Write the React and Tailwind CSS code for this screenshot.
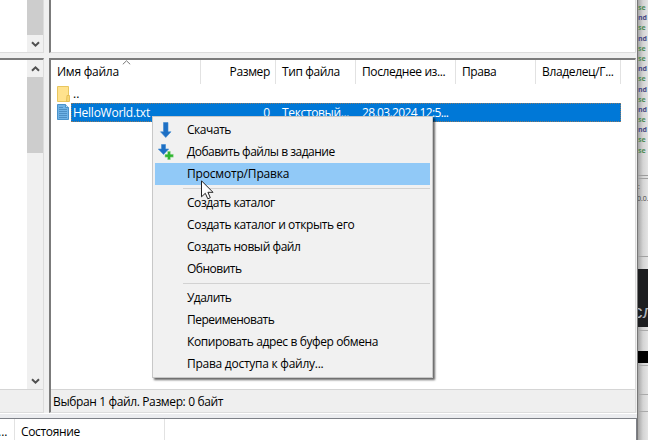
import React from "react";

const Chevron = ({ up }) => (
  <svg width="9" height="7" viewBox="0 0 9 7" className={up ? "rotate-180" : ""}>
    <path d="M1 1.2 L4.5 4.7 L8 1.2" fill="none" stroke="#505050" strokeWidth="2" />
  </svg>
);

const Arrow = ({ small }) =>
  small ? (
    <svg width="16" height="16" viewBox="0 0 16 16">
      <path d="M3.500 .5h4v4.500h3.200L5.500 10.500.3 5h3.200z" fill="#1d6fc4" stroke="#3a86d0" strokeWidth=".6" />
      <path d="M9.500 7.300h3v2.900h2.900v3h-2.900v2.600h-3v-2.600H6.900v-3h2.600z" fill="#2fb52f" stroke="#c9e8c9" strokeWidth=".4" />
    </svg>
  ) : (
    <svg width="16" height="16" viewBox="0 0 16 16">
      <path d="M5.500 .5h4.500v9.300h3L7.750 15.500 2.500 9.800h3z" fill="#1d6fc4" stroke="#3a86d0" strokeWidth=".6" />
    </svg>
  );

const menu = [
  ["Скачать", "tracking-[-0.45px]", "down"],
  ["Добавить файлы в задание", "tracking-[-0.5px]", "add"],
  ["Просмотр/Правка", "tracking-[-0.18px]", "hover"],
  null,
  ["Создать каталог", "tracking-[-0.45px]"],
  ["Создать каталог и открыть его", "tracking-[-0.4px]"],
  ["Создать новый файл", "tracking-[-0.44px]"],
  ["Обновить", "tracking-[-0.5px]"],
  null,
  ["Удалить", "tracking-[-0.55px]"],
  ["Переименовать", "tracking-[-0.5px]"],
  ["Копировать адрес в буфер обмена", "tracking-[-0.39px]"],
  ["Права доступа к файлу...", "tracking-[-0.26px]"],
];

function ContextMenu() {
  return (
    <div className="absolute left-[152px] top-[116px] w-[281px] border border-[#c8c8c8] bg-[#f1f1f1] p-[2px] shadow-[2px_2px_2px_rgba(0,0,0,0.6)]">
      {menu.map((m, i) =>
        m === null ? (
          <div key={i} className="ml-7 flex h-[7px] flex-col pt-[3px]">
            <div className="h-px bg-[#d2d2d2]" />
          </div>
        ) : (
          <div key={i} className={"flex h-[22px] items-center " + (m[2] === "hover" ? "bg-[#91c9f7]" : "")}>
            <div className="w-8 shrink-0 pl-[3px]">
              {m[2] === "down" && <Arrow />}
              {m[2] === "add" && <Arrow small />}
            </div>
            <span className={m[1]}>{m[0]}</span>
          </div>
        ),
      )}
    </div>
  );
}

const columns = [
  ["Имя файла", "w-[150px] pl-[6px]", "tracking-[-0.25px]"],
  ["Размер", "w-[75px] justify-end pr-[5px]", "tracking-[-0.35px]"],
  ["Тип файла", "w-[80px] pl-[6px]", "tracking-[-0.38px]"],
  ["Последнее из...", "w-[100px] pl-[6px]", "tracking-[-0.4px]"],
  ["Права", "w-[80px] pl-[6px]", "tracking-[-0.4px]"],
  ["Владелец/Г...", "w-[85px] pl-[6px]", "tracking-[-0.35px]"],
];

const code = ["se", "nd", "se", "nd", "se", "se", "nd", "se", "nd", "se", "nd", "se", "nd", "se", "se"];

function Background() {
  return (
    <div className="h-[440px] w-[10px] shrink-0 overflow-hidden bg-[linear-gradient(90deg,#a5a5a5,#d4d4d4_5px,#e4e4e4)]">
      <div className="flex h-[176px] flex-col border-b border-[#9c9c9c] pt-[3px] text-[7px] leading-[10.2px] font-bold">
        {code.map((c, i) => (
          <div key={i} className={"h-[10.2px] shrink-0 " + (c === "nd" ? "text-[#484883]" : "text-[#4e8a55]")}>
            {c}
          </div>
        ))}
      </div>
      <div className="mt-[2px] h-[79px] border-y border-[#a0a0a0] pt-[2px] text-[7px] leading-[12px] text-[#444]">
        <div>:</div>
        <div className="-ml-px">0.0.1</div>
      </div>
      <div className="h-[12px]" />
      <div className="flex h-[58px] items-center bg-[#1d1e20] pt-[27px] font-['Liberation_Sans',sans-serif] text-[19px] text-[#b0b3ba]">
        <span className="-ml-[5px]">сл</span>
      </div>
      <div className="mt-[3px] h-[21px] border-t border-[#aaa]" />
      <div className="h-[12px] bg-black" />
      <div className="mt-[2px] h-[30px] border-y border-[#aaa]" />
      <div className="h-[17px] border-b border-[#aaa]" />
    </div>
  );
}

export default function App() {
  return (
    <div className="relative flex h-[440px] w-[648px] overflow-hidden bg-white font-['Open_Sans','Noto_Sans',sans-serif] text-[12px] leading-[16px] whitespace-nowrap text-black">
      <div className="flex h-[440px] w-[638px] shrink-0 flex-col border-r border-[#777] bg-[#f0f0f0]">
        <div className="flex h-[53px] shrink-0">
          <div className="flex w-[44px] justify-end border-r border-b border-[#dcdcdc] bg-white">
            <div className="flex w-4 flex-col bg-[#f0f0f0]">
              <div className="h-[35px] bg-[#cdcdcd]" />
              <div className="flex flex-1 items-center justify-center pt-[2px]"><Chevron /></div>
            </div>
          </div>
          <div className="ml-[5px] w-[587px] border-r border-b border-l-2 border-[#dcdcdc] border-l-[#7b7b7b] bg-white" />
        </div>
        <div className="mt-[5px] flex h-[355px] shrink-0">
          <div className="flex w-[44px] flex-col border-t-2 border-r border-b border-t-[#7b7b7b] border-r-[#dcdcdc] border-b-[#dcdcdc]">
            <div className="flex h-[329px] justify-end bg-white">
              <div className="flex w-4 flex-col bg-[#f0f0f0]">
                <div className="flex h-[17px] items-center justify-center"><Chevron up /></div>
                <div className="h-[76px] bg-[#cdcdcd]" />
                <div className="flex flex-1 items-end justify-center pb-[4px]"><Chevron /></div>
              </div>
            </div>
            <div className="flex-1 border-t border-[#d5d5d5] bg-[#efefef]" />
          </div>
          <div className="ml-[5px] flex w-[587px] flex-col border-t-2 border-r border-b border-l-2 border-t-[#7b7b7b] border-r-[#dcdcdc] border-b-[#dcdcdc] border-l-[#7b7b7b]">
            <div className="h-[329px] bg-white">
              <div className="flex h-[24px]">
                {columns.map(([t, c, k]) => (
                  <div key={t} className={"relative flex shrink-0 items-center border-r border-[#e2e2e2] " + c}>
                    <span className={k}>{t}</span>
                    {t === "Имя файла" && (
                      <svg className="absolute top-0 left-[71px]" width="9" height="5" viewBox="0 0 9 5">
                        <path d="M.8 4.300 4.500 .8 8.200 4.300" fill="none" stroke="#777" strokeWidth="1" />
                      </svg>
                    )}
                  </div>
                ))}
              </div>
              <div className="flex h-[19px] items-center pl-[6px]">
                <svg width="13" height="16" viewBox="0 0 13 16">
                  <path d="M.5 .5h11v15H.5z" fill="#ffe28d" stroke="#e8c65f" />
                  <path d="M10 9.500h2.500v6H9.500z" fill="#f8d775" stroke="#dfb84b" strokeWidth=".8" />
                </svg>
                <span className="pl-[3px]">..</span>
              </div>
              <div className="flex h-[19px]">
                <div className="w-[20px] pt-px pl-[6px]">
                  <svg width="12" height="16" viewBox="0 0 12 16">
                    <path d="M.5 .5h8l3 3v12H.5z" fill="#70b3e6" stroke="#4a93cb" />
                    <path d="M8.500 .5v3h3" fill="#b8dcf5" stroke="#4a93cb" />
                    <path d="M2 3.500h4M2 5.500h8M2 7.500h8M2 9.500h8M2 11.500h8M2 13.500h8" stroke="#3c80b5" strokeWidth=".7" />
                  </svg>
                </div>
                <div className="flex w-[550px] items-center border border-dotted border-[#8a7a66] bg-[#0078d7] text-white">
                  <span className="w-[129px] pl-px tracking-[-0.25px]">HelloWorld.txt</span>
                  <span className="w-[69px] text-right">0</span>
                  <span className="w-[80px] pl-[12px] tracking-[-0.35px]">Текстовый...</span>
                  <span className="pl-[12px] tracking-[-0.62px]">28.03.2024 12:5...</span>
                </div>
              </div>
            </div>
            <div className="flex flex-1 items-center border-t border-[#d5d5d5] bg-[#efefef] pt-px pl-[2px]">
              <span className="tracking-[-0.37px]">Выбран 1 файл. Размер: 0 байт</span>
            </div>
          </div>
        </div>
        <div className="h-[5px] shrink-0 border-t border-white bg-[#ebecef]" />
        <div className="flex flex-1 border-t border-r border-[#7d8087] bg-white">
          <div className="flex w-[15px] items-center border-r border-[#e2e2e2] pt-[4px]"><span className="-ml-[2px]">...</span></div>
          <div className="flex w-[150px] items-center border-r border-[#e2e2e2] pt-[4px] pl-[6px]">
            <span className="tracking-[-0.35px]">Состояние</span>
          </div>
        </div>
      </div>
      <Background />
      <ContextMenu />
      <svg className="absolute left-[201px] top-[180px]" width="13" height="20" viewBox="0 0 13 20">
        <path d="M.5 .8v16l3.800-3.500 2.500 5.500 2.500-1.100-2.400-5.400h5.100z" fill="#fff" stroke="#222" strokeWidth="1" />
      </svg>
    </div>
  );
}
